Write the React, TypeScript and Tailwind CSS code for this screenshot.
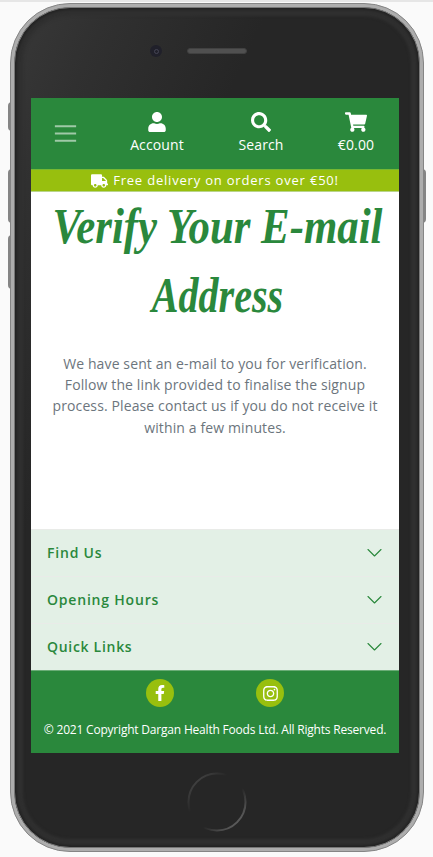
import type { ReactNode } from 'react';
import { FaUser, FaSearch, FaShoppingCart, FaTruck, FaFacebookF, FaInstagram } from 'react-icons/fa';

function NavItem({ icon, label, className }: { icon: ReactNode; label: string; className: string }) {
  return (
    <a className={`flex flex-col items-center text-white ${className}`}>
      <span className="flex h-5 items-center text-[20px]">{icon}</span>
      <span className="mt-[3px] whitespace-nowrap text-[14px] leading-5 tracking-[0.12px]">{label}</span>
    </a>
  );
}

function FooterRow({ label, className }: { label: string; className: string }) {
  return (
    <div className="flex h-[47px] items-center justify-between border-t border-[#e9ebe8] bg-[#e3f0e6] px-4">
      <span className={`text-[14px] font-semibold leading-5 text-[#2a883c] ${className}`}>{label}</span>
      <svg className="h-4 w-[17px]" viewBox="0 0 16 16" fill="none" stroke="#2a883c" strokeWidth="1.1" strokeLinecap="round" strokeLinejoin="round">
        <path d="M1.5 4.5 8 11l6.5-6.5" />
      </svg>
    </div>
  );
}

function Header() {
  return (
    <header className="flex h-[71px] bg-[#2a883c] pt-[14px]">
      <svg className="ml-[20px] mt-[7px] h-[29px] w-[29px]" viewBox="0 0 30 30" stroke="white" strokeOpacity=".55" strokeWidth="2">
        <path d="M4 7.5h22M4 15h22M4 22.5h22" />
      </svg>
      <NavItem icon={<FaUser />} label="Account" className="ml-[47px] w-[60px]" />
      <NavItem icon={<FaSearch />} label="Search" className="ml-[44px] w-[60px]" />
      <NavItem icon={<FaShoppingCart className="w-[22px]" />} label="€0.00" className="ml-[35px] w-[60px]" />
    </header>
  );
}

export default function App() {
  return (
    <div className="relative h-[857px] w-[433px] overflow-hidden border-t-2 border-[#e6e6e6] bg-[#fafafa] font-['Open_Sans','Noto_Sans',sans-serif]">
      <div className="absolute left-[8px] top-[100px] h-[29px] w-[4px] rounded-l-sm bg-[#858585]" />
      <div className="absolute left-[8px] top-[167px] h-[54px] w-[4px] rounded-l-sm bg-[#858585]" />
      <div className="absolute left-[8px] top-[233px] h-[54px] w-[4px] rounded-l-sm bg-[#858585]" />
      <div className="absolute left-[422px] top-[167px] h-[54px] w-[4px] rounded-r-sm bg-[#858585]" />

      <div className="relative ml-[10px] mt-px h-[849px] w-[414px] rounded-[60px] border border-[#858585] bg-[#adadad] p-[3px]">
        <div className="h-full rounded-[56px] border border-[#777777] bg-[#262626] bg-[linear-gradient(115deg,#383838_0%,#303030_12%,#262626_32%,#262626_100%)] px-4 shadow-[inset_0_0_3px_2px_#222222,inset_0_0_3px_8px_#303030]">
          <div className="relative flex h-[90px] items-start justify-center pt-[38px]">
            <div className="mr-[25px] mt-[-1px] flex h-[12px] w-[12px] items-center justify-center rounded-full bg-[#20202a]">
              <div className="h-[5px] w-[5px] rounded-full border border-[#454555]" />
            </div>
            <div className="mr-[37px] mt-[2px] h-[6px] w-[60px] rounded-full border border-[#414141] bg-[#505050]" />
          </div>

          <div className="flex h-[655px] w-[368px] flex-col bg-white">
            <Header />
            <div className="flex h-[23px] shrink-0 items-center justify-center border-y border-[#b9d58b] border-t-[#75b832] bg-[#98bf0e] text-white">
              <FaTruck className="mr-[5px] h-[14px] w-[17px]" />
              <span className="mb-[2px] whitespace-nowrap text-[13px] leading-5 tracking-[0.8px]">Free delivery on orders over €50!</span>
            </div>

            <main className="flex h-[337px] flex-col items-center">
              <h1 className="h-[138px] whitespace-nowrap text-center font-['Liberation_Serif',serif] text-[51px] font-bold italic leading-[69px] text-[#2a883c]">
                <span className="block origin-center translate-x-[2px] scale-x-[0.84]">Verify Your E-mail</span>
                <span className="block origin-center translate-x-[2px] scale-x-[0.785]">Address</span>
              </h1>
              <p className="mt-[23px] text-center text-[14px] leading-[21.2px] tracking-[0.12px] text-[#6c757d]">
                We have sent an e-mail to you for verification.<br />
                Follow the link provided to finalise the signup<br />
                process. Please contact us if you do not receive it<br />
                within a few minutes.
              </p>
            </main>

            <section>
              <FooterRow label="Find Us" className="tracking-[0.8px]" />
              <FooterRow label="Opening Hours" className="tracking-[0.8px]" />
              <FooterRow label="Quick Links" className="tracking-[0.7px]" />
            </section>

            <footer className="flex flex-1 flex-col items-center border-t border-[#6aac76] bg-[#2a883c] text-white">
              <div className="mt-[8px] flex gap-[82px]">
                <span className="flex h-[28px] w-[28px] items-center justify-center rounded-full bg-[#98bf0e]"><FaFacebookF size={16} /></span>
                <span className="flex h-[28px] w-[28px] items-center justify-center rounded-full bg-[#98bf0e]"><FaInstagram size={17} /></span>
              </div>
              <p className="mt-[13px] whitespace-nowrap text-[12px] leading-5 tracking-[-0.2px]">© 2021 Copyright Dargan Health Foods Ltd. All Rights Reserved.</p>
            </footer>
          </div>

          <div className="flex justify-center pt-[19px]">
            <svg className="mr-px h-[60px] w-[60px]" viewBox="0 0 60 60" fill="none" strokeWidth="2">
              <defs>
                <linearGradient id="ring" x1="0" y1="0" x2="1" y2="1">
                  <stop offset="0" stopColor="#505050" />
                  <stop offset=".35" stopColor="#262626" />
                  <stop offset=".6" stopColor="#262626" />
                  <stop offset="1" stopColor="#777777" />
                </linearGradient>
              </defs>
              <circle cx="30" cy="30" r="28.5" stroke="url(#ring)" />
            </svg>
          </div>
        </div>
      </div>
    </div>
  );
}
